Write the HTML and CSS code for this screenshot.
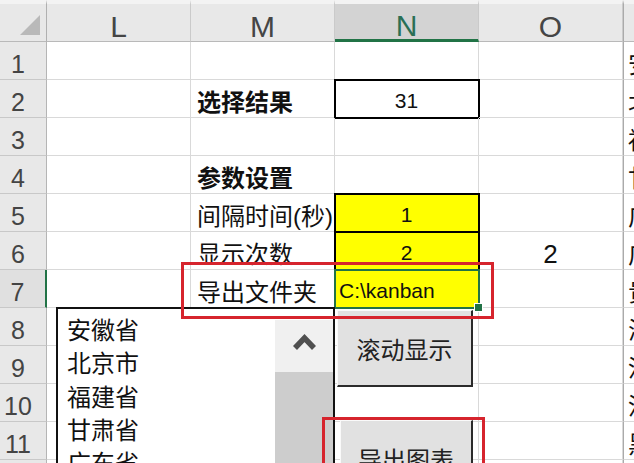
FILE: index.html
```html
<!DOCTYPE html>
<html lang="zh-CN">
<head>
<meta charset="utf-8">
<title>Sheet</title>
<link rel="stylesheet" href="styles.css">
</head>
<body>
<div class="sheet">
  <div class="ch corner"><svg class="tri" width="20" height="20" viewBox="0 0 20 20"><polygon points="0,20 20,20 20,0" fill="#b9b9b9"/></svg></div>
  <div class="ch">L</div>
  <div class="ch">M</div>
  <div class="ch on">N</div>
  <div class="ch">O</div>
  <div class="ch edge"></div>

  <div class="rh">1</div><div class="c"></div><div class="c"></div><div class="c"></div><div class="c"></div><div class="c p">安徽省</div>
  <div class="rh">2</div><div class="c"></div><div class="c b">选择结果</div><div class="c num box">31</div><div class="c"></div><div class="c p">北京市</div>
  <div class="rh">3</div><div class="c"></div><div class="c"></div><div class="c"></div><div class="c"></div><div class="c p">福建省</div>
  <div class="rh">4</div><div class="c"></div><div class="c b">参数设置</div><div class="c"></div><div class="c"></div><div class="c p">甘肃省</div>
  <div class="rh">5</div><div class="c"></div><div class="c">间隔时间(秒)</div><div class="c num box yel">1</div><div class="c"></div><div class="c p">广东省</div>
  <div class="rh">6</div><div class="c"></div><div class="c">显示次数</div><div class="c num box yel">2</div><div class="c num big">2</div><div class="c p">广西</div>
  <div class="rh sel">7</div><div class="c"></div><div class="c">导出文件夹</div><div class="c act">C:\kanban</div><div class="c"></div><div class="c p">贵州省</div>
  <div class="rh">8</div><div class="c"></div><div class="c"></div><div class="c"></div><div class="c"></div><div class="c p">海南省</div>
  <div class="rh">9</div><div class="c"></div><div class="c"></div><div class="c"></div><div class="c"></div><div class="c p">河北省</div>
  <div class="rh">10</div><div class="c"></div><div class="c"></div><div class="c"></div><div class="c"></div><div class="c p">河南省</div>
  <div class="rh">11</div><div class="c"></div><div class="c"></div><div class="c"></div><div class="c"></div><div class="c p">黑龙江省</div>
  <div class="rh">12</div><div class="c"></div><div class="c"></div><div class="c"></div><div class="c"></div><div class="c p">湖北省</div>
</div>

<div class="listbox">
  <ul class="items">
    <li>安徽省</li>
    <li>北京市</li>
    <li>福建省</li>
    <li>甘肃省</li>
    <li>广东省</li>
  </ul>
  <div class="scroll">
    <div class="up"><svg width="23" height="17" viewBox="0 0 23 17"><polyline points="2,14 11.5,4 21,14" fill="none" stroke="#4f4f4f" stroke-width="5.5"/></svg></div>
    <div class="thumb"></div>
  </div>
</div>

<div class="btn btn1">滚动显示</div>
<div class="btn btn2">导出图表</div>

<div class="mark mark1"></div>
<div class="mark mark2"></div>
</body>
</html>
```
FILE: styles.css
```css
html, body {
  margin: 0;
  padding: 0;
}
body {
  width: 634px;
  height: 463px;
  overflow: hidden;
  position: relative;
  background: #fff;
  font-family: "Liberation Sans", "Noto Sans CJK SC", sans-serif;
  color: #111;
}
.sheet {
  display: grid;
  grid-template-columns: 47px 144px 144px 144px 144px 11px;
  grid-template-rows: 42px;
  grid-auto-rows: 38px;
}
.ch {
  box-sizing: border-box;
  background: #e8e8e8;
  border-top: 4px solid #f3f3f3;
  border-right: 1px solid #cacaca;
  border-bottom: 1px solid #b9b9b9;
  display: flex;
  align-items: center;
  justify-content: center;
  padding-top: 8px;
  font-size: 30px;
  color: #454545;
}
.ch.corner {
  justify-content: flex-start;
  align-items: flex-start;
  padding: 11px 0 0 20px;
  border-right-color: #b0b0b0;
}
.tri { display: block; }
.ch.on {
  background: #d3d3d3;
  color: #2a6f55;
  border-bottom: 3px solid #217346;
}
.ch.edge {
  border-left: 1px solid #aaaaaa;
  border-right: none;
}
.rh {
  box-sizing: border-box;
  background: #e8e8e8;
  border-right: 1px solid #b5b5b5;
  border-bottom: 1px solid #c8c8c8;
  display: flex;
  align-items: center;
  justify-content: center;
  padding: 8px 10px 0 0;
  font-size: 25px;
  color: #444;
}
.rh.sel {
  background: #e0e0e0;
  border-right: 2px solid #217346;
}
.c {
  box-sizing: border-box;
  border-right: 1px solid #d9d9d9;
  border-bottom: 1px solid #d9d9d9;
  display: flex;
  align-items: center;
  padding: 4px 6px 0;
  font-size: 24px;
  white-space: nowrap;
  min-width: 0;
}
.c.b { font-weight: bold; }
.c.num {
  justify-content: center;
  font-size: 21px;
}
.c.big {
  font-size: 26px;
  padding-top: 8px;
}
.c.box {
  outline: 2px solid #000;
  outline-offset: -1px;
}
.c.yel { background: #ffff00; }
.c.act {
  background: #ffff00;
  outline: 2px solid #217346;
  outline-offset: -1px;
  font-size: 21px;
  padding-left: 4px;
  position: relative;
}
.c.act::after {
  content: "";
  position: absolute;
  right: -5px;
  bottom: -5px;
  width: 7px;
  height: 7px;
  background: #217346;
  border: 1px solid #fff;
}
.c.p {
  border-left: 1px solid #aaaaaa;
  border-right: none;
  padding-left: 4px;
  overflow: hidden;
}
.listbox {
  position: absolute;
  left: 56px;
  top: 307px;
  width: 279px;
  height: 200px;
  box-sizing: border-box;
  border: 2px solid #111;
  border-bottom: none;
  background: #fff;
}
.items {
  list-style: none;
  margin: 0;
  padding: 5px 0 0 9px;
}
.items li {
  font-size: 24px;
  line-height: 33.3px;
  height: 33.3px;
  white-space: nowrap;
}
.scroll {
  position: absolute;
  right: 0;
  top: 11px;
  bottom: 0;
  width: 58px;
  display: flex;
  flex-direction: column;
}
.up {
  height: 52px;
  background: #f0f0f0;
  display: flex;
  justify-content: center;
  padding-top: 14px;
  box-sizing: border-box;
}
.up svg { display: block; }
.thumb {
  flex: 1;
  background: #cdcdcd;
}
.btn {
  position: absolute;
  box-sizing: border-box;
  background: #e1e1e1;
  border-top: 1px solid #fafafa;
  border-left: 1px solid #fafafa;
  border-right: 2px solid #2b2b2b;
  border-bottom: 2px solid #2b2b2b;
  display: flex;
  align-items: center;
  justify-content: center;
  font-size: 24px;
  color: #222;
}
.btn1 {
  left: 337px;
  top: 310px;
  width: 136px;
  height: 77px;
}
.btn2 {
  left: 340px;
  top: 420px;
  width: 133px;
  height: 77px;
}
.mark {
  position: absolute;
  box-sizing: border-box;
  border: 3px solid #d6242d;
}
.mark1 {
  left: 181px;
  top: 262px;
  width: 313px;
  height: 57px;
}
.mark2 {
  left: 322px;
  top: 417px;
  width: 163px;
  height: 100px;
}
```
